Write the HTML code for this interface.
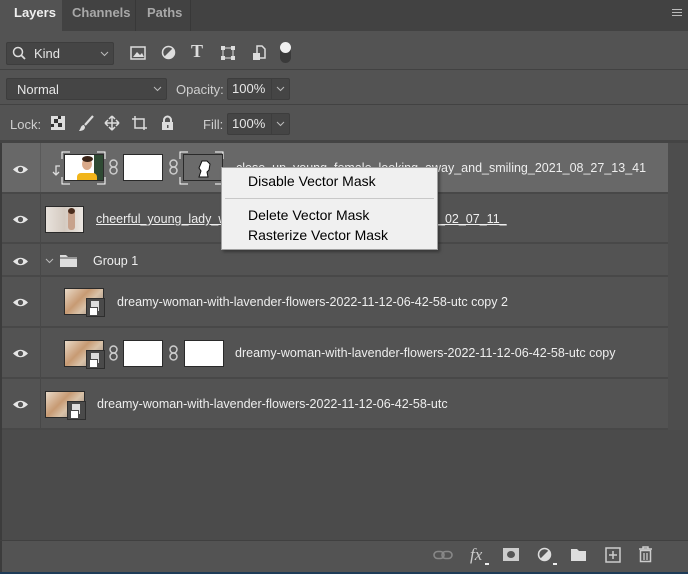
<!DOCTYPE html>
<html><head><meta charset="utf-8"><style>
*{margin:0;padding:0;box-sizing:border-box}
body{width:688px;height:574px;background:#4b4b4b;font-family:"Liberation Sans",sans-serif;font-size:12px;color:#e6e6e6;position:relative;overflow:hidden}
.a{position:absolute}
.t{white-space:nowrap}
.box{position:absolute;background:#454545;border:1px solid #3d3d3d;border-radius:2px}
.row{position:absolute;left:0;width:668px;background:#535353;border-bottom:2px solid #484848}
.eye{position:absolute;left:12px;width:17px;height:11px}
.div{position:absolute;left:40px;top:0;bottom:0;width:1px;background:#484848}
.thumb{position:absolute;border:1px solid #2a2a2a}
.wm{background:#fff;border:1px solid #2a2a2a;position:absolute}
.so{position:absolute;width:19px;height:19px;background:#4a4a4a;border:1px solid #2e2e2e}
.so:before{content:"";position:absolute;left:4px;top:2px;width:8px;height:10px;background:#ddd}
.so:after{content:"";position:absolute;left:2px;top:8px;width:7px;height:7px;background:#fff;border:1px solid #4a4a4a}
.lnk{position:absolute;width:9px;height:16px}
.dog{background:linear-gradient(135deg,#e9dac8 0%,#c79a73 40%,#d9c2a8 60%,#8a7e76 100%)}
</style></head><body>
<!-- tab bar -->
<div class="a" style="left:0;top:0;width:688px;height:31px;background:#424242"></div>
<div class="a" style="left:0;top:0;width:62px;height:31px;background:#535353"></div>
<div class="a t" style="left:14px;top:5px;font-weight:bold;font-size:13px;color:#f0f0f0">Layers</div>
<div class="a" style="left:135px;top:0;width:1px;height:31px;background:#383838"></div>
<div class="a t" style="left:72px;top:5px;font-weight:bold;font-size:13px;color:#a8a8a8">Channels</div>
<div class="a" style="left:190px;top:0;width:1px;height:31px;background:#383838"></div>
<div class="a t" style="left:147px;top:5px;font-weight:bold;font-size:13px;color:#a8a8a8">Paths</div>
<div class="a" style="left:672px;top:9px;width:10px;height:7px;border-top:1px solid #bbb;border-bottom:1px solid #bbb"></div>
<div class="a" style="left:672px;top:12px;width:10px;height:1px;background:#bbb"></div>
<!-- toolbar area -->
<div class="a" style="left:0;top:31px;width:688px;height:112px;background:#535353"></div>
<div class="a" style="left:0;top:69px;width:688px;height:1px;background:#424242"></div>
<div class="a" style="left:0;top:104px;width:688px;height:1px;background:#424242"></div>
<div class="a" style="left:0;top:140px;width:688px;height:3px;background:#444"></div>
<div class="box" style="left:6px;top:42px;width:108px;height:23px"></div>
<svg class="a" style="left:12px;top:46px" width="14" height="14"><circle cx="6" cy="6" r="4.5" stroke="#ddd" stroke-width="1.5" fill="none"/><path d="M9 9l4 4" stroke="#ddd" stroke-width="1.8"/></svg>
<div class="a t" style="left:34px;top:46px;font-size:13px">Kind</div>
<svg class="a" style="left:100px;top:51px" width="9" height="6"><path d="M1 1l3.5 3.5L8 1" stroke="#bbb" fill="none"/></svg>
<svg class="a" style="left:130px;top:46px" width="16" height="14"><rect x="1" y="1" width="14" height="12" fill="none" stroke="#ddd" stroke-width="1.5"/><path d="M3 11l4-5 3 3 2-2 2 4z" fill="#ddd"/></svg>
<svg class="a" style="left:161px;top:45px" width="15" height="15"><circle cx="7.5" cy="7.5" r="6" fill="none" stroke="#ddd" stroke-width="1.5"/><path d="M12 3A6 6 0 0 1 3 12z" fill="#ddd"/></svg>
<div class="a t" style="left:191px;top:41px;font-family:'Liberation Serif',serif;font-weight:bold;font-size:18px;color:#ddd">T</div>
<svg class="a" style="left:221px;top:46px" width="14" height="14"><rect x="2" y="2" width="10" height="10" fill="none" stroke="#ddd"/><rect x="0" y="0" width="4" height="4" fill="#ddd"/><rect x="10" y="0" width="4" height="4" fill="#ddd"/><rect x="0" y="10" width="4" height="4" fill="#ddd"/><rect x="10" y="10" width="4" height="4" fill="#ddd"/></svg>
<svg class="a" style="left:252px;top:45px" width="14" height="16"><path d="M5 1h5l3 3v9H5z" fill="none" stroke="#ddd" stroke-width="1.5"/><rect x="1" y="8" width="7" height="7" fill="#ddd"/></svg>
<div class="a" style="left:280px;top:42px;width:11px;height:21px;border-radius:6px;background:#3a3a3a"></div>
<div class="a" style="left:280px;top:42px;width:11px;height:11px;border-radius:6px;background:#f0f0f0"></div>
<!-- blend -->
<div class="box" style="left:6px;top:78px;width:161px;height:22px"></div>
<div class="a t" style="left:17px;top:82px;font-size:13px">Normal</div>
<svg class="a" style="left:153px;top:86px" width="9" height="6"><path d="M1 1l3.5 3.5L8 1" stroke="#bbb" fill="none"/></svg>
<div class="a t" style="left:176px;top:82px;font-size:13px;color:#cfcfcf">Opacity:</div>
<div class="box" style="left:227px;top:78px;width:63px;height:22px"></div>
<div class="a" style="left:271px;top:79px;width:1px;height:20px;background:#3d3d3d"></div>
<div class="a t" style="left:232px;top:81px;font-size:13px">100%</div>
<svg class="a" style="left:276px;top:86px" width="9" height="6"><path d="M1 1l3.5 3.5L8 1" stroke="#bbb" fill="none"/></svg>
<!-- lock -->
<div class="a t" style="left:10px;top:117px;font-size:13px;color:#cfcfcf">Lock:</div>
<svg class="a" style="left:51px;top:116px" width="14" height="14"><rect width="14" height="14" fill="#ddd"/><rect x="3" y="3" width="4" height="4" fill="#333"/><rect x="7" y="7" width="4" height="4" fill="#333"/><rect x="7" y="0" width="3" height="3" fill="#333"/><rect x="0" y="8" width="3" height="3" fill="#333"/></svg>
<svg class="a" style="left:78px;top:115px" width="16" height="17"><path d="M15 1L7 10" stroke="#ddd" stroke-width="2.2"/><path d="M6 10c-3 0-3 3-5 6 3 0 6-1 6-4z" fill="#ddd"/></svg>
<svg class="a" style="left:104px;top:115px" width="16" height="16"><path d="M8 1v14M1 8h14M8 1l-3 3M8 1l3 3M8 15l-3-3M8 15l3-3M1 8l3-3M1 8l3 3M15 8l-3-3M15 8l-3 3" stroke="#ddd" stroke-width="1.5" fill="none"/></svg>
<svg class="a" style="left:131px;top:115px" width="17" height="16"><path d="M4 1v12h12M1 4h12v11" stroke="#ddd" stroke-width="1.5" fill="none"/></svg>
<svg class="a" style="left:161px;top:115px" width="13" height="15"><path d="M3 7V5a3.5 3.5 0 0 1 7 0v2" stroke="#ddd" stroke-width="2" fill="none"/><rect x="1" y="7" width="11" height="8" fill="#ddd"/><rect x="6" y="10" width="1.5" height="3" fill="#555"/></svg>
<div class="a t" style="left:203px;top:117px;font-size:13px;color:#cfcfcf">Fill:</div>
<div class="box" style="left:227px;top:113px;width:63px;height:22px"></div>
<div class="a" style="left:271px;top:114px;width:1px;height:20px;background:#3d3d3d"></div>
<div class="a t" style="left:232px;top:116px;font-size:13px">100%</div>
<svg class="a" style="left:276px;top:121px" width="9" height="6"><path d="M1 1l3.5 3.5L8 1" stroke="#bbb" fill="none"/></svg>
<!-- right strip -->
<div class="a" style="left:668px;top:143px;width:20px;height:287px;background:#4d4d4d"></div>
<div class="a" style="left:0;top:143px;width:2px;height:430px;background:#3c3c3c"></div>

<!-- rows -->
<div class="row" style="top:143px;height:51px;background:#686868;left:2px;width:666px">
<div class="div" style="left:38px;background:#5a5a5a"></div>
</div>
<div class="row" style="top:194px;height:50px;left:2px;width:666px"><div class="div" style="left:38px"></div></div>
<div class="row" style="top:244px;height:33px;left:2px;width:666px"><div class="div" style="left:38px"></div></div>
<div class="row" style="top:277px;height:51px;left:2px;width:666px"><div class="div" style="left:38px"></div></div>
<div class="row" style="top:328px;height:51px;left:2px;width:666px"><div class="div" style="left:38px"></div></div>
<div class="row" style="top:379px;height:51px;left:2px;width:666px"><div class="div" style="left:38px"></div></div>

<!-- eyes -->
<svg class="a" style="left:12px;top:164px" width="17" height="11"><path d="M1 5.5Q8.5-2 16 5.5Q8.5 13 1 5.5z" fill="#e6e6e6"/><circle cx="8.5" cy="5.5" r="2.6" fill="#555"/></svg>
<svg class="a" style="left:12px;top:214px" width="17" height="11"><path d="M1 5.5Q8.5-2 16 5.5Q8.5 13 1 5.5z" fill="#e6e6e6"/><circle cx="8.5" cy="5.5" r="2.6" fill="#535353"/></svg>
<svg class="a" style="left:12px;top:256px" width="17" height="11"><path d="M1 5.5Q8.5-2 16 5.5Q8.5 13 1 5.5z" fill="#e6e6e6"/><circle cx="8.5" cy="5.5" r="2.6" fill="#535353"/></svg>
<svg class="a" style="left:12px;top:297px" width="17" height="11"><path d="M1 5.5Q8.5-2 16 5.5Q8.5 13 1 5.5z" fill="#e6e6e6"/><circle cx="8.5" cy="5.5" r="2.6" fill="#535353"/></svg>
<svg class="a" style="left:12px;top:348px" width="17" height="11"><path d="M1 5.5Q8.5-2 16 5.5Q8.5 13 1 5.5z" fill="#e6e6e6"/><circle cx="8.5" cy="5.5" r="2.6" fill="#535353"/></svg>
<svg class="a" style="left:12px;top:399px" width="17" height="11"><path d="M1 5.5Q8.5-2 16 5.5Q8.5 13 1 5.5z" fill="#e6e6e6"/><circle cx="8.5" cy="5.5" r="2.6" fill="#535353"/></svg>

<!-- row 1 -->
<svg class="a" style="left:52px;top:165px" width="9" height="11"><path d="M8 1H4v9M1 7l3 3 3-3" stroke="#ddd" stroke-width="1.3" fill="none"/></svg>
<svg class="a" style="left:61px;top:151px" width="45" height="34"><path d="M1 8V1h8M36 1h8v7M1 26v7h8M36 33h8v-7" stroke="#fff" fill="none"/></svg>
<div class="thumb" style="left:64px;top:154px;width:40px;height:27px;background:#fff;overflow:hidden"><div class="a" style="right:0;top:0;width:9px;height:25px;background:#2f4a34"></div><div class="a" style="left:17px;top:3px;width:10px;height:12px;border-radius:50%;background:#d9a98a"></div><div class="a" style="left:17px;top:1px;width:11px;height:6px;border-radius:50%;background:#3a2418"></div><div class="a" style="left:12px;top:18px;width:20px;height:8px;background:#f1b51a;border-radius:4px 4px 0 0"></div></div>
<svg class="lnk" style="left:109px;top:159px" viewBox="0 0 9 16"><rect x="1" y="1" width="7" height="7" rx="3.5" fill="none" stroke="#ccc" stroke-width="1.5"/><rect x="1" y="8" width="7" height="7" rx="3.5" fill="none" stroke="#ccc" stroke-width="1.5"/></svg>
<div class="wm" style="left:123px;top:154px;width:40px;height:27px"></div>
<svg class="lnk" style="left:169px;top:159px" viewBox="0 0 9 16"><rect x="1" y="1" width="7" height="7" rx="3.5" fill="none" stroke="#ccc" stroke-width="1.5"/><rect x="1" y="8" width="7" height="7" rx="3.5" fill="none" stroke="#ccc" stroke-width="1.5"/></svg>
<svg class="a" style="left:179px;top:151px" width="45" height="34"><path d="M1 8V1h8M36 1h8v7M1 26v7h8M36 33h8v-7" stroke="#fff" fill="none"/></svg>
<div class="thumb" style="left:183px;top:154px;width:40px;height:27px;background:#6b6b6b"></div>
<svg class="a" style="left:197px;top:160px" width="14" height="18"><path d="M5 1h5l3 3-1 6-2 2 1 5H2l2-6-2-3z" fill="#fff" stroke="#111"/></svg>
<div class="a t" style="left:236px;top:161px;font-size:12.5px;color:#eee">close_up_young_female_looking_away_and_smiling_2021_08_27_13_41</div>
<!-- row 2 -->
<div class="thumb" style="left:45px;top:206px;width:39px;height:27px;background:linear-gradient(90deg,#e8e2dc,#d4cac0 50%,#ece7e2);overflow:hidden"><div class="a" style="left:22px;top:3px;width:7px;height:20px;background:#c7a28c;border-radius:3px"></div><div class="a" style="left:22px;top:1px;width:7px;height:6px;background:#4a2c1c;border-radius:50%"></div></div>
<div class="a t" style="left:96px;top:212px;font-size:12.5px;color:#eee;text-decoration:underline">cheerful_young_lady_w</div>
<div class="a t" style="left:438px;top:212px;font-size:12.5px;color:#eee;text-decoration:underline">_02_07_11_</div>
<!-- group -->
<svg class="a" style="left:45px;top:258px" width="9" height="6"><path d="M1 1l3.5 3.5L8 1" stroke="#bbb" fill="none"/></svg>
<svg class="a" style="left:59px;top:253px" width="19" height="15"><path d="M1 2h6l2 2h9v10H1z" fill="#ddd"/><path d="M1 5h17" stroke="#535353"/></svg>
<div class="a t" style="left:93px;top:254px;font-size:12.5px;color:#eee">Group 1</div>
<!-- row 4 -->
<div class="thumb dog" style="left:64px;top:288px;width:40px;height:27px"></div>
<div class="so" style="left:86px;top:298px"></div>
<div class="a t" style="left:117px;top:295px;font-size:12.5px;color:#eee">dreamy-woman-with-lavender-flowers-2022-11-12-06-42-58-utc copy 2</div>
<!-- row 5 -->
<div class="thumb dog" style="left:64px;top:340px;width:40px;height:27px"></div>
<div class="so" style="left:86px;top:350px"></div>
<svg class="lnk" style="left:109px;top:345px" viewBox="0 0 9 16"><rect x="1" y="1" width="7" height="7" rx="3.5" fill="none" stroke="#ccc" stroke-width="1.5"/><rect x="1" y="8" width="7" height="7" rx="3.5" fill="none" stroke="#ccc" stroke-width="1.5"/></svg>
<div class="wm" style="left:123px;top:340px;width:40px;height:27px"></div>
<svg class="lnk" style="left:169px;top:345px" viewBox="0 0 9 16"><rect x="1" y="1" width="7" height="7" rx="3.5" fill="none" stroke="#ccc" stroke-width="1.5"/><rect x="1" y="8" width="7" height="7" rx="3.5" fill="none" stroke="#ccc" stroke-width="1.5"/></svg>
<div class="wm" style="left:184px;top:340px;width:40px;height:27px"></div>
<div class="a t" style="left:235px;top:346px;font-size:12.5px;color:#eee">dreamy-woman-with-lavender-flowers-2022-11-12-06-42-58-utc copy</div>
<!-- row 6 -->
<div class="thumb dog" style="left:45px;top:391px;width:40px;height:27px"></div>
<div class="so" style="left:67px;top:401px"></div>
<div class="a t" style="left:97px;top:397px;font-size:12.5px;color:#eee">dreamy-woman-with-lavender-flowers-2022-11-12-06-42-58-utc</div>

<!-- context menu -->
<div class="a" style="left:221px;top:167px;width:217px;height:83px;background:#f0f0f0;border:1px solid #a0a0a0;box-shadow:2px 2px 3px rgba(0,0,0,.35)"></div>
<div class="a t" style="left:248px;top:173px;font-size:14px;color:#000">Disable Vector Mask</div>
<div class="a" style="left:225px;top:198px;width:209px;height:1px;background:#c8c8c8"></div>
<div class="a t" style="left:248px;top:207px;font-size:14px;color:#000">Delete Vector Mask</div>
<div class="a t" style="left:248px;top:227px;font-size:14px;color:#000">Rasterize Vector Mask</div>

<!-- bottom bar -->
<div class="a" style="left:0;top:540px;width:688px;height:1px;background:#404040"></div>
<div class="a" style="left:2px;top:541px;width:686px;height:31px;background:#535353"></div>
<div class="a" style="left:0;top:572px;width:688px;height:2px;background:#1f3c58"></div>
<svg class="a" style="left:433px;top:550px" width="20" height="10"><rect x="1" y="1.5" width="10" height="7" rx="3.5" fill="none" stroke="#888" stroke-width="1.6"/><rect x="9" y="1.5" width="10" height="7" rx="3.5" fill="none" stroke="#888" stroke-width="1.6"/></svg>
<div class="a t" style="left:470px;top:545px;font-family:'Liberation Serif',serif;font-style:italic;font-size:17px;color:#ccc">fx</div>
<div class="a" style="left:485px;top:563px;width:4px;height:2px;background:#eee"></div>
<div class="a" style="left:503px;top:548px;width:16px;height:13px;background:#ccc"></div>
<div class="a" style="left:507px;top:551px;width:8px;height:7px;border-radius:50%;background:#555"></div>
<svg class="a" style="left:537px;top:547px" width="16" height="16"><circle cx="7.5" cy="7.5" r="6" fill="none" stroke="#ddd" stroke-width="1.5"/><path d="M12 3A6 6 0 0 1 3 12z" fill="#ddd"/></svg>
<div class="a" style="left:553px;top:563px;width:4px;height:2px;background:#eee"></div>
<svg class="a" style="left:570px;top:548px" width="17" height="14"><path d="M1 1h6l2 2h7v10H1z" fill="#ddd"/></svg>
<svg class="a" style="left:605px;top:547px" width="16" height="16"><rect x="1" y="1" width="14" height="14" fill="none" stroke="#ccc" stroke-width="1.5"/><path d="M8 4v8M4 8h8" stroke="#ccc" stroke-width="1.5"/></svg>
<svg class="a" style="left:638px;top:546px" width="15" height="17"><path d="M1 3h13M5 3V1h5v2" stroke="#ccc" stroke-width="1.5" fill="none"/><rect x="2.5" y="4.5" width="10" height="11" fill="none" stroke="#ccc" stroke-width="1.5"/><path d="M6 7v7M9 7v7" stroke="#ccc" stroke-width="1.3"/></svg>
</body></html>
